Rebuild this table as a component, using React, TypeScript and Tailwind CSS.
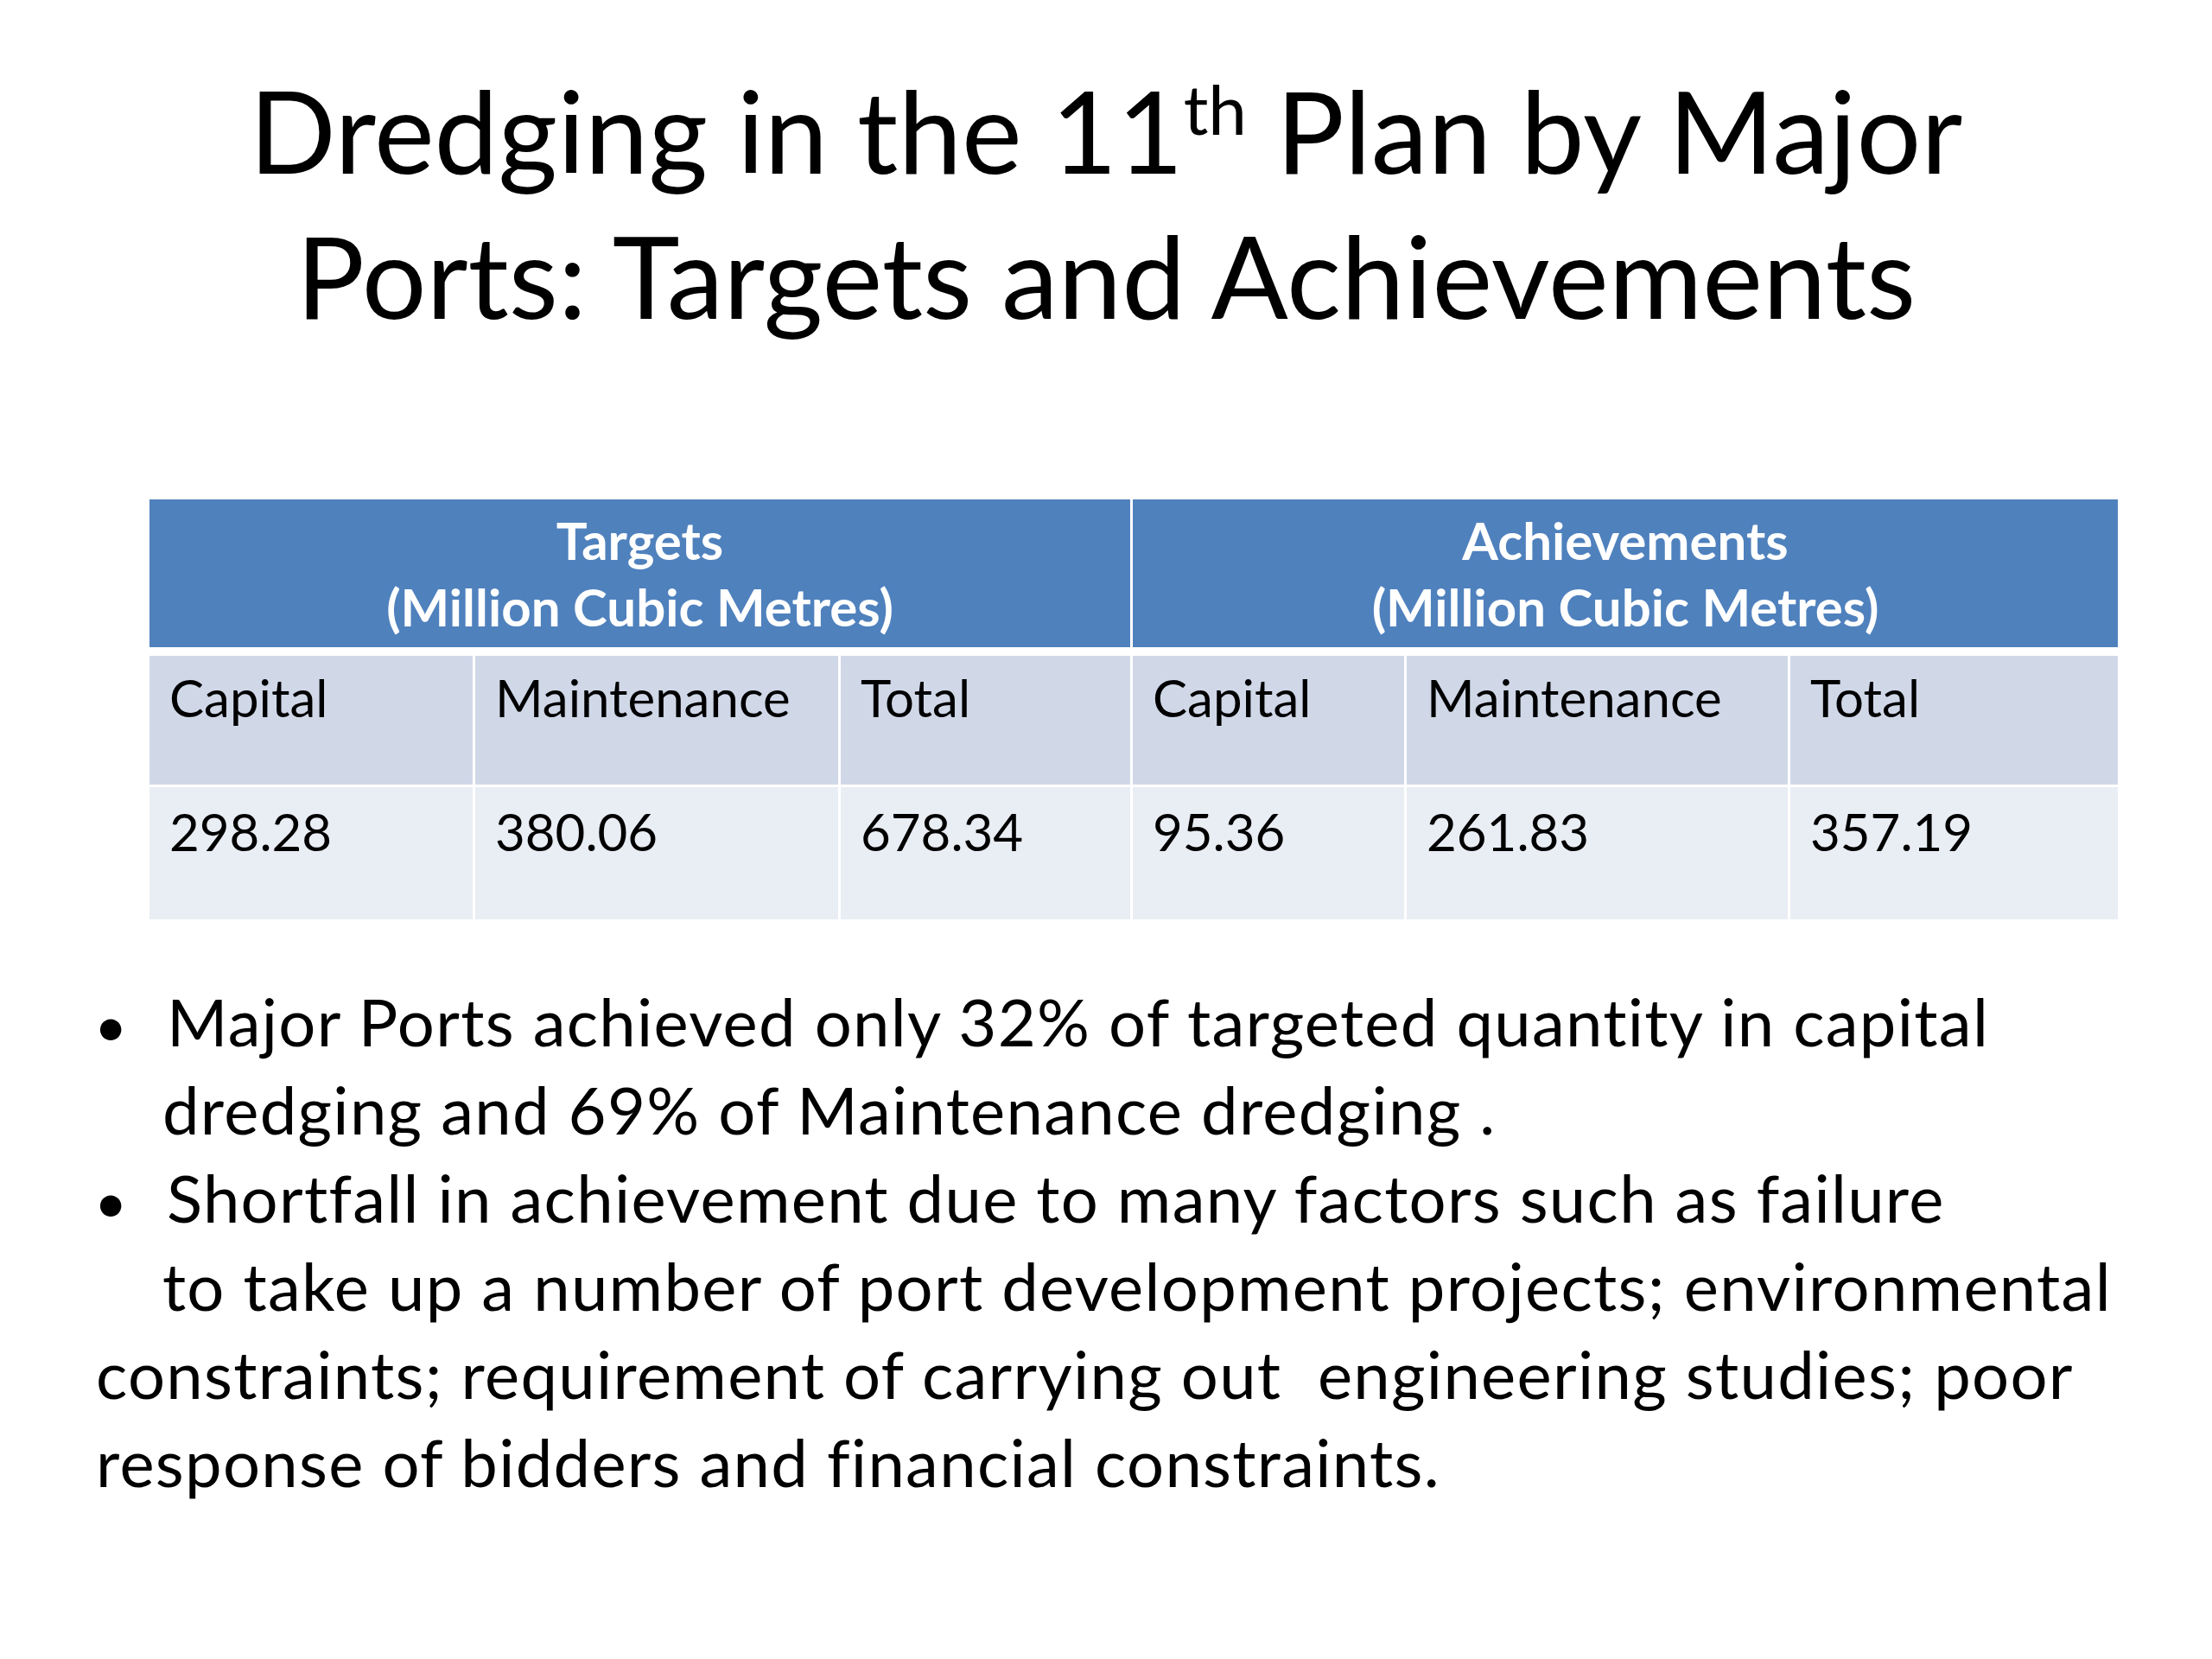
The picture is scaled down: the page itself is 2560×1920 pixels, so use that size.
import React from "react";

const font = { fontFamily: "Lato, 'Open Sans', sans-serif" };

const headers = ["Capital", "Maintenance", "Total", "Capital", "Maintenance", "Total"];
const values = ["298.28", "380.06", "678.34", "95.36", "261.83", "357.19"];

export default function App() {
  return (
    <div className="w-[2560px] h-[1920px] bg-white text-black" style={font}>
      {/* Title */}
      <div className="pt-[66px] text-center text-[132px] leading-[168px]">
        <div>
          Dredging in the 11<span className="align-super text-[80px] leading-none">th</span> Plan by Major
        </div>
        <div>Ports: Targets and Achievements</div>
      </div>

      {/* Table */}
      <div className="mt-[176px] ml-[173px] w-[2278px] text-[60px] leading-[77px]">
        <div className="grid grid-cols-[1135px_1140px] gap-x-[3px] h-[171px] bg-white">
          <div className="bg-[#4f81bd] text-white font-bold flex flex-col items-center justify-center">
            <div>Targets</div>
            <div>(Million Cubic Metres)</div>
          </div>
          <div className="bg-[#4f81bd] text-white font-bold flex flex-col items-center justify-center">
            <div>Achievements</div>
            <div>(Million Cubic Metres)</div>
          </div>
        </div>
        <div className="mt-[10px] grid grid-cols-[374px_420px_335px_314px_441px_379px] gap-x-[3px] gap-y-[3px]">
          {headers.map((h, i) => (
            <div key={"h" + i} className="bg-[#d0d8e8] h-[149px] pl-[23px] pt-[10px]">
              {h}
            </div>
          ))}
          {values.map((v, i) => (
            <div key={"v" + i} className="bg-[#e9edf4] h-[153px] pl-[23px] pt-[13px]">
              {v}
            </div>
          ))}
        </div>
      </div>

      {/* Notes */}
      <div className="mt-[67px] text-[76px] leading-[102px] tracking-[1.3px] whitespace-pre">
        <div className="pl-[109px] flex items-baseline h-[102px]">
          <span className="w-[84px] text-[66px] leading-none">•</span>
          <span>Major Ports achieved only 32% of targeted quantity in capital</span>
        </div>
        <div className="pl-[188px] h-[102px]">dredging and 69% of Maintenance dredging .</div>
        <div className="pl-[109px] flex items-baseline h-[102px]">
          <span className="w-[84px] text-[66px] leading-none">•</span>
          <span>Shortfall in achievement due to many factors such as failure</span>
        </div>
        <div className="pl-[188px] h-[102px]">to take up a number of port development projects; environmental</div>
        <div className="pl-[111px] h-[102px]">constraints; requirement of carrying out  engineering studies; poor</div>
        <div className="pl-[111px] h-[102px]">response of bidders and financial constraints.</div>
      </div>
    </div>
  );
}
